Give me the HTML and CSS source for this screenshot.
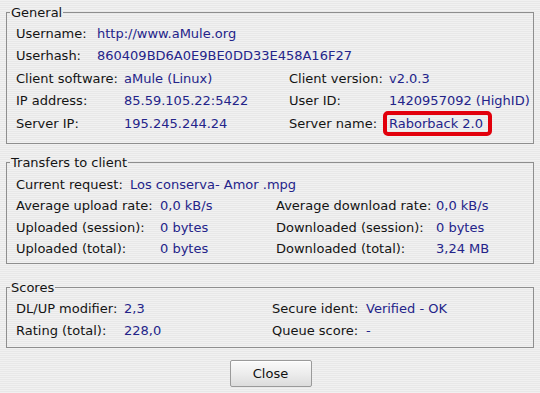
FILE: index.html
```html
<html>
  <head>
    <title>Client details</title>
    <meta charset="utf-8" />
    <link rel="stylesheet" href="styles.css">
  </head>
  <body>
    <fieldset class="box general">
      <legend>General</legend>
      <div class="grid g-top">
        <span>Username:</span><span class="val">http://www.aMule.org</span>
        <span>Userhash:</span><span class="val">860409BD6A0E9BE0DD33E458A16F27</span>
      </div>
      <div class="grid g-main">
        <span>Client software:</span><span class="val">aMule (Linux)</span>
        <span>Client version:</span><span class="val">v2.0.3</span>
        <span>IP address:</span><span class="val">85.59.105.22:5422</span>
        <span>User ID:</span><span class="val">1420957092 (HighID)</span>
        <span>Server IP:</span><span class="val">195.245.244.24</span>
        <span>Server name:</span><span class="val"><span class="marked">Raborback 2.0</span></span>
      </div>
    </fieldset>

    <fieldset class="box transfers">
      <legend>Transfers to client</legend>
      <div class="grid t-top">
        <span>Current request:</span><span class="val">Los conserva- Amor .mpg</span>
      </div>
      <div class="grid t-main">
        <span>Average upload rate:</span><span class="val">0,0 kB/s</span>
        <span>Average download rate:</span><span class="val">0,0 kB/s</span>
        <span>Uploaded (session):</span><span class="val">0 bytes</span>
        <span>Downloaded (session):</span><span class="val">0 bytes</span>
        <span>Uploaded (total):</span><span class="val">0 bytes</span>
        <span>Downloaded (total):</span><span class="val">3,24 MB</span>
      </div>
    </fieldset>

    <fieldset class="box scores">
      <legend>Scores</legend>
      <div class="grid s-main">
        <span>DL/UP modifier:</span><span class="val">2,3</span>
        <span>Secure ident:</span><span class="val">Verified - OK</span>
        <span>Rating (total):</span><span class="val">228,0</span>
        <span>Queue score:</span><span class="val">-</span>
      </div>
    </fieldset>

    <div class="actions">
      <button class="close-btn">Close</button>
    </div>
  </body>
</html>
```

FILE: styles.css
```css
html, body {
  width: 100%;
  height: 100%;
  margin: 0px;
  overflow: hidden;
}

body {
  box-sizing: border-box;
  padding: 5px 6px 0 6px;
  font-family: "DejaVu Sans", sans-serif;
  font-size: 13px;
  color: #141414;
  background: repeating-linear-gradient(#f1f1f1 0px, #f1f1f1 1px, #e8e8e8 1px, #e8e8e8 2px);
}

.box {
  margin: 0px;
  border: 1px solid #8e8e8e;
  padding: 2px 8px 8px 9px;
  min-width: 0;
}

.box legend {
  margin-left: -6px;
  padding: 0 1px;
  line-height: 15px;
}

.transfers {
  margin-top: 11px;
  padding-top: 4px;
  padding-bottom: 3px;
}

.scores {
  margin-top: 16px;
  padding-top: 3px;
  padding-bottom: 5px;
}

.grid {
  display: grid;
  grid-auto-rows: 22px;
  align-items: center;
  white-space: nowrap;
}

.general .grid {
  grid-auto-rows: 22.5px;
}

.transfers .grid {
  grid-auto-rows: 21.5px;
}

.g-top { grid-template-columns: 81px 1fr; }
.g-main { grid-template-columns: 108px 165px 100px 1fr; }
.t-top { grid-template-columns: 114px 1fr; }
.t-main { grid-template-columns: 144px 116px 160px 1fr; }
.s-main { grid-template-columns: 108px 148px 94px 1fr; }

.val {
  color: #24248a;
}

.marked {
  position: relative;
  display: inline-block;
}

/* red highlight drawn over the server name */
.marked::after {
  content: "";
  position: absolute;
  left: -6px;
  top: 50%;
  width: 109px;
  height: 25px;
  margin-top: -12px;
  box-sizing: border-box;
  border: 4px solid #e2000c;
  border-radius: 5px;
}

.actions {
  display: flex;
  justify-content: center;
  margin-top: 12px;
  padding-left: 1px;
}

.close-btn {
  width: 82px;
  height: 27px;
  font-family: "DejaVu Sans", sans-serif;
  font-size: 13px;
  color: #111;
  border: 1px solid #9a9a9a;
  border-radius: 2px;
  background: linear-gradient(#fafafa, #ebebeb 55%, #dcdcdc);
  box-shadow: inset 0 1px 0 #fff;
}
```
